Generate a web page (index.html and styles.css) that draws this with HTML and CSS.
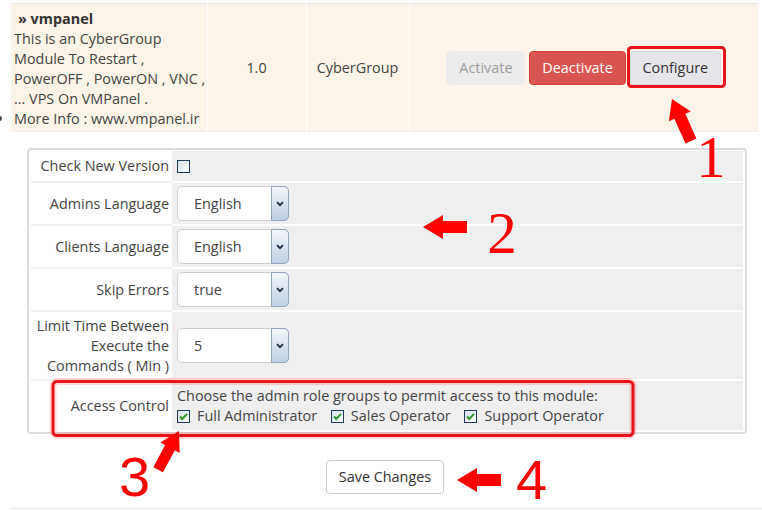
FILE: index.html
```html
<!DOCTYPE html>
<html lang="en">
<head>
  <meta charset="UTF-8">
  <meta name="viewport" content="width=device-width, initial-scale=1.0">
  <title>Addon Modules - vmpanel</title>
  <link rel="stylesheet" href="styles.css">
</head>
<body>

  <table class="modules">
    <colgroup>
      <col class="col-info">
      <col class="col-version">
      <col class="col-author">
      <col class="col-actions">
    </colgroup>
    <tr class="module-row">
      <td class="module-info">
        <strong class="module-name">» vmpanel</strong><br>
        This is an CyberGroup<br>
        Module To Restart ,<br>
        PowerOFF , PowerON , VNC ,<br>
        ... VPS On VMPanel .
        <ul class="module-links"><li>More Info : www.vmpanel.ir</li></ul>
      </td>
      <td class="module-cell">1.0</td>
      <td class="module-cell">CyberGroup</td>
      <td class="module-cell">
        <button class="btn btn-disabled">Activate</button>
        <button class="btn btn-danger">Deactivate</button>
        <button class="btn btn-default">Configure</button>
      </td>
    </tr>
  </table>

  <div class="config-box">
    <table class="form">
      <tr class="row-check">
        <td class="fieldlabel">Check New Version</td>
        <td class="fieldarea">
          <span class="cb"><svg width="13" height="13" viewBox="0 0 13 13"><defs><linearGradient id="cbg" x1="0" y1="0" x2="1" y2="1"><stop offset="0" stop-color="#d5dde6"/><stop offset="1" stop-color="#ffffff"/></linearGradient></defs><rect x="0.5" y="0.5" width="12" height="12" fill="url(#cbg)" stroke="#1d3c5e"/></svg></span>
        </td>
      </tr>
      <tr class="row-select">
        <td class="fieldlabel">Admins Language</td>
        <td class="fieldarea">
          <div class="select"><select><option>English</option></select><span class="select-arrow"><svg width="8" height="6" viewBox="0 0 8 6"><path d="M1 1.2 L4 4.2 L7 1.2" fill="none" stroke="#1b2a44" stroke-width="1.8"/></svg></span></div>
        </td>
      </tr>
      <tr class="row-select">
        <td class="fieldlabel">Clients Language</td>
        <td class="fieldarea">
          <div class="select"><select><option>English</option></select><span class="select-arrow"><svg width="8" height="6" viewBox="0 0 8 6"><path d="M1 1.2 L4 4.2 L7 1.2" fill="none" stroke="#1b2a44" stroke-width="1.8"/></svg></span></div>
        </td>
      </tr>
      <tr class="row-select">
        <td class="fieldlabel">Skip Errors</td>
        <td class="fieldarea">
          <div class="select"><select><option>true</option></select><span class="select-arrow"><svg width="8" height="6" viewBox="0 0 8 6"><path d="M1 1.2 L4 4.2 L7 1.2" fill="none" stroke="#1b2a44" stroke-width="1.8"/></svg></span></div>
        </td>
      </tr>
      <tr class="row-limit">
        <td class="fieldlabel">Limit Time Between<br>Execute the<br>Commands ( Min )</td>
        <td class="fieldarea">
          <div class="select"><select><option>5</option></select><span class="select-arrow"><svg width="8" height="6" viewBox="0 0 8 6"><path d="M1 1.2 L4 4.2 L7 1.2" fill="none" stroke="#1b2a44" stroke-width="1.8"/></svg></span></div>
        </td>
      </tr>
      <tr class="row-access">
        <td class="fieldlabel">Access Control</td>
        <td class="fieldarea">
          Choose the admin role groups to permit access to this module:<br>
          <label class="role"><span class="cb"><svg width="13" height="13" viewBox="0 0 13 13"><rect x="0.5" y="0.5" width="12" height="12" fill="url(#cbg)" stroke="#1d3c5e"/><path d="M3 6.5 L5.3 9 L10 3.8" fill="none" stroke="#2e9a2a" stroke-width="2"/></svg></span>Full Administrator</label>
          <label class="role"><span class="cb"><svg width="13" height="13" viewBox="0 0 13 13"><rect x="0.5" y="0.5" width="12" height="12" fill="url(#cbg)" stroke="#1d3c5e"/><path d="M3 6.5 L5.3 9 L10 3.8" fill="none" stroke="#2e9a2a" stroke-width="2"/></svg></span>Sales Operator</label>
          <label class="role"><span class="cb"><svg width="13" height="13" viewBox="0 0 13 13"><rect x="0.5" y="0.5" width="12" height="12" fill="url(#cbg)" stroke="#1d3c5e"/><path d="M3 6.5 L5.3 9 L10 3.8" fill="none" stroke="#2e9a2a" stroke-width="2"/></svg></span>Support Operator</label>
        </td>
      </tr>
    </table>
  </div>

  <div class="actions">
    <button class="btn btn-save">Save Changes</button>
  </div>

  <div class="bottom-rule"></div>

  <!-- red notes drawn over the screenshot -->
  <svg class="annotations" width="762" height="511" viewBox="0 0 762 511">
    <rect x="53" y="381.5" width="580" height="54" rx="4" fill="none" stroke="rgba(255,0,0,0.15)" stroke-width="7"/>
    <rect x="628.5" y="47.5" width="96" height="39" rx="3" fill="none" stroke="#e8141b" stroke-width="3"/>
    <rect x="53" y="381.5" width="580" height="54" rx="4" fill="none" stroke="#e8141b" stroke-width="3"/>
    <g fill="#f00">
      <polygon transform="translate(672 99) rotate(65.7)" points="0,0 19,-12 19,-6 46,-6 46,6 19,6 19,12"/>
      <polygon transform="translate(423 227)" points="0,0 20,-12 20,-6 44,-6 44,6 20,6 20,12"/>
      <polygon transform="translate(179 431) rotate(118.3)" points="0,0 19,-11 19,-5.5 44,-5.5 44,5.5 19,5.5 19,11"/>
      <polygon transform="translate(457 480)" points="0,0 20,-12 20,-6 44,-6 44,6 20,6 20,12"/>
    </g>
    <g class="note-num" fill="#f00">
      <text class="serif" x="711" y="177" text-anchor="middle">1</text>
      <text class="serif" x="502" y="253" text-anchor="middle">2</text>
      <text class="sans" x="134.5" y="496" text-anchor="middle">3</text>
      <text class="sans" x="531.5" y="499" text-anchor="middle">4</text>
    </g>
  </svg>

</body>
</html>
```

FILE: styles.css
```css
body {
  margin: 0;
  position: relative;
  width: 762px;
  height: 511px;
  overflow: hidden;
  background: #fff;
  font-family: "Open Sans", Arial, sans-serif;
  font-size: 14.4px;
  line-height: 20px;
  color: #444;
}

/* module list */
.modules {
  margin: 3px 4px 0 11px;
  width: 747px;
  table-layout: fixed;
  border-collapse: collapse;
  border-top: 1px solid #e6e6e6;
  border-bottom: 1px solid #eeeeee;
}

.col-info { width: 196px; }
.col-version { width: 99px; }
.col-author { width: 103px; }
.col-actions { width: 349px; }

.module-row td {
  background-color: #fcf4e8;
  padding: 0;
}

.module-info {
  padding: 5px 0 2px 3px !important;
  vertical-align: top;
}

.module-name {
  margin-left: 4px;
  font-weight: bold;
  color: #333;
}

.module-links {
  margin: 0;
  padding: 0;
  list-style: disc outside;
}

.module-cell {
  border-left: 1px solid #fff;
  text-align: center;
  vertical-align: middle;
}

.btn {
  font-family: "Open Sans", Arial, sans-serif;
  font-size: 14.4px;
  line-height: 20px;
  padding: 6px 12px;
  border: 1px solid transparent;
  border-radius: 4px;
  cursor: pointer;
}

.btn-disabled {
  background-color: #ececec;
  border-color: #ececec;
  color: #9d9d9d;
}

.btn-danger {
  background-color: #d9534f;
  border-color: #d43f3a;
  color: #fff;
}

.btn-default {
  background-color: #e6e6ea;
  border-color: #d8d8dc;
  color: #333;
}

/* configuration panel */
.config-box {
  margin: 16px 0 0 27px;
  width: 712px;
  border: 2px solid #dddddd;
  border-radius: 4px;
  padding: 1px 2px 2px 2px;
}

.form {
  width: 100%;
  border-collapse: collapse;
}

.fieldlabel {
  width: 138px;
  padding: 0 3px 0 0;
  background-color: #fff;
  border-bottom: 2px solid #efefef;
  text-align: right;
  vertical-align: middle;
  color: #444;
}

.fieldarea {
  padding: 0 0 0 5px;
  background-color: #efefef;
  border-bottom: 2px solid #fff;
  vertical-align: middle;
  color: #444;
}

.row-check td { height: 30px; }
.row-select td { height: 41px; }
.row-limit td { height: 67px; }
.row-access td { height: 49px; border-bottom: none; }

.cb {
  display: inline-block;
  width: 13px;
  height: 13px;
  vertical-align: -2px;
}

.cb svg {
  display: block;
}

.select {
  position: relative;
  display: inline-block;
  vertical-align: middle;
}

.select select {
  appearance: none;
  -webkit-appearance: none;
  display: block;
  width: 112px;
  height: 35px;
  margin: 0;
  padding: 0 0 0 16px;
  border: 1px solid #cfcfcf;
  border-radius: 5px;
  background: #fff;
  font-family: "Open Sans", Arial, sans-serif;
  font-size: 14.4px;
  color: #444;
}

.select-arrow {
  position: absolute;
  top: 0;
  right: 0;
  bottom: 0;
  width: 16px;
  border: 1px solid #93a5c0;
  border-radius: 0 5px 5px 0;
  background: linear-gradient(to bottom, #f3f6fa, #c0cfe3);
  display: flex;
  align-items: center;
  justify-content: center;
}

.role {
  margin-right: 10px;
}

.role .cb {
  margin-right: 7px;
}

/* save */
.actions {
  width: 716px;
  margin-left: 27px;
  padding-top: 26px;
  text-align: center;
}

.btn-save {
  background-color: #fff;
  border-color: #cccccc;
  color: #333;
}

.bottom-rule {
  margin: 14px 0 0 10px;
  border-top: 1px solid #e6e6e6;
}

/* notes */
.annotations {
  position: absolute;
  top: 0;
  left: 0;
  pointer-events: none;
}

.note-num .serif {
  font-family: "Liberation Serif", "Times New Roman", serif;
  font-size: 59px;
}

.note-num .sans {
  font-family: "Liberation Sans", Arial, sans-serif;
  font-size: 56px;
}
```
